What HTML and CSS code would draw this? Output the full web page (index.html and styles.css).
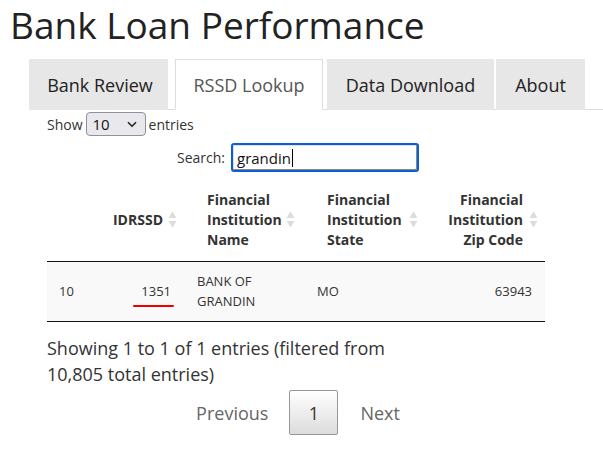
FILE: index.html
```html
<!DOCTYPE html>
<html>
<head>
<meta charset="utf-8">
<link rel="stylesheet" href="styles.css">
</head>
<body>
<h1 class="title">Bank Loan Performance</h1>
<ul class="tabs">
  <li class="tab tab-review">Bank Review</li>
  <li class="tab tab-rssd active">RSSD Lookup</li>
  <li class="tab tab-data">Data Download</li>
  <li class="tab tab-about">About</li>
</ul>
<div class="content">
  <div class="length">
    <span>Show</span>
    <span class="select"><span class="select-val">10</span>
      <svg class="chev" width="10" height="7" viewBox="0 0 10 7"><path d="M1 1.2 L5 5.2 L9 1.2" fill="none" stroke="#222" stroke-width="1.6"/></svg>
    </span>
    <span>entries</span>
  </div>
  <div class="filter">
    <span class="filter-label">Search:</span>
    <span class="search"><span class="search-text">grandin</span><span class="caret"></span></span>
  </div>
  <table class="grid">
    <colgroup>
      <col class="c0"><col class="c1"><col class="c2"><col class="c3"><col class="c4">
    </colgroup>
    <thead>
      <tr>
        <th class="h0"></th>
        <th class="h1 sort">IDRSSD<svg class="arrows" width="9" height="17" viewBox="0 0 9 17"><path d="M4.5 0.5 L8.5 7 L0.5 7 Z" fill="#dcdcdc"/><path d="M0.5 10 L8.5 10 L4.5 16.5 Z" fill="#dcdcdc"/></svg></th>
        <th class="h2 sort">Financial<br>Institution<br>Name<svg class="arrows" width="9" height="17" viewBox="0 0 9 17"><path d="M4.5 0.5 L8.5 7 L0.5 7 Z" fill="#dcdcdc"/><path d="M0.5 10 L8.5 10 L4.5 16.5 Z" fill="#dcdcdc"/></svg></th>
        <th class="h3 sort">Financial<br>Institution<br>State<svg class="arrows" width="9" height="17" viewBox="0 0 9 17"><path d="M4.5 0.5 L8.5 7 L0.5 7 Z" fill="#dcdcdc"/><path d="M0.5 10 L8.5 10 L4.5 16.5 Z" fill="#dcdcdc"/></svg></th>
        <th class="h4 sort">Financial<br>Institution<br>Zip Code<svg class="arrows" width="9" height="17" viewBox="0 0 9 17"><path d="M4.5 0.5 L8.5 7 L0.5 7 Z" fill="#dcdcdc"/><path d="M0.5 10 L8.5 10 L4.5 16.5 Z" fill="#dcdcdc"/></svg></th>
      </tr>
    </thead>
    <tbody>
      <tr>
        <td class="d0">10</td>
        <td class="d1"><span class="mark">1351</span></td>
        <td class="d2">BANK OF<br>GRANDIN</td>
        <td class="d3">MO</td>
        <td class="d4">63943</td>
      </tr>
    </tbody>
  </table>
  <div class="info">Showing 1 to 1 of 1 entries (filtered from 10,805 total entries)</div>
  <div class="paging">
    <span class="pg pg-off pg-prev">Previous</span>
    <span class="pg pg-cur">1</span>
    <span class="pg pg-off pg-next">Next</span>
  </div>
</div>
</body>
</html>
```
FILE: styles.css
```css
html, body {
  margin: 0;
  padding: 0;
  background: #fff;
}
body {
  font-family: "Open Sans", "DejaVu Sans", sans-serif;
  color: #333;
}
.title {
  margin: 0;
  padding: 0 0 0 10px;
  height: 59px;
  font-size: 37px;
  line-height: 50px;
  font-weight: 400;
  color: #222;
}
.tabs {
  list-style: none;
  margin: 0 0 0 29px;
  padding: 0;
  display: flex;
  border-bottom: 1px solid #ddd;
  height: 50px;
}
.tab {
  box-sizing: border-box;
  height: 51px;
  background: #e7e7e7;
  color: #222;
  font-size: 18px;
  display: flex;
  align-items: center;
  justify-content: center;
}
.tab-review { width: 139px; margin-right: 7px; padding-left: 3px; }
.tab-rssd { width: 148px; margin-right: 4px; }
.tab-data { width: 167px; margin-right: 2px; }
.tab-about { width: 89px; }
.tab.active {
  background: #fff;
  color: #555;
  border: 1px solid #ddd;
  border-bottom-color: #fff;
}
.content {
  margin-left: 47px;
  width: 498px;
}
.length {
  margin-top: 2px;
  height: 24px;
  display: flex;
  align-items: center;
  gap: 3px;
  font-size: 14px;
  color: #333;
}
.select {
  box-sizing: border-box;
  width: 60px;
  height: 24px;
  border: 1px solid #8f8f9d;
  border-radius: 4px;
  background: #e9e9ed;
  display: flex;
  align-items: center;
  justify-content: space-between;
  padding: 0 8px 0 6px;
  font-size: 15px;
  color: #111;
}
.filter {
  width: 372px;
  margin-top: 7px;
  display: flex;
  justify-content: flex-end;
  align-items: center;
  gap: 6px;
  font-size: 14px;
}
.search {
  box-sizing: border-box;
  width: 188px;
  height: 29px;
  border: 2px solid #0b5fd4;
  border-radius: 3px;
  box-shadow: inset -1px -1px 0 #8a8a8a, inset 1px 1px 0 #e0e0e0;
  display: flex;
  align-items: center;
  padding-left: 4px;
  font-size: 15px;
  color: #111;
}
.caret {
  display: inline-block;
  width: 0;
  height: 18px;
  border-left: 1px solid #000;
  margin-left: 1px;
}
.grid {
  margin-top: 6px;
  width: 498px;
  table-layout: fixed;
  border-collapse: collapse;
  border-spacing: 0;
}
.c0 { width: 60px; }
.c1 { width: 80px; }
.c2 { width: 120px; }
.c3 { width: 123px; }
.c4 { width: 115px; }
.grid th {
  position: relative;
  font-size: 14px;
  font-weight: 700;
  line-height: 20px;
  color: #333;
  padding: 12px 10px 11px 20px;
  text-align: left;
  vertical-align: middle;
  border-bottom: 1px solid #111;
  white-space: nowrap;
}
.grid th.h1 { text-align: right; padding-left: 0; padding-right: 24px; }
.grid th.h4 { text-align: right; padding-left: 0; padding-right: 22px; }
.arrows {
  position: absolute;
  top: 50%;
  margin-top: -9px;
  right: 10px;
}
.h2 .arrows, .h3 .arrows { right: 12px; }
.h4 .arrows { right: 7px; }
.grid td {
  background: #f9f9f9;
  font-size: 13px;
  line-height: 20px;
  color: #333;
  padding: 9px 10px 10px 10px;
  vertical-align: middle;
  border-bottom: 1px solid #111;
}
.grid td.d0 { padding-left: 12px; }
.grid td.d1 { text-align: right; padding-right: 16px; }
.grid td.d4 { text-align: right; padding-right: 13px; }
.mark {
  position: relative;
  display: inline-block;
}
.mark::after {
  content: "";
  position: absolute;
  left: -8px;
  right: -3px;
  bottom: -6px;
  height: 2px;
  background: #e00;
  border-radius: 1px;
}
.info {
  margin-top: 13px;
  width: 380px;
  font-size: 18px;
  line-height: 26px;
  color: #333;
}
.paging {
  margin-top: 3px;
  padding-left: 4px;
  display: flex;
  justify-content: center;
  align-items: center;
  font-size: 18px;
}
.pg {
  box-sizing: border-box;
  height: 45px;
  display: flex;
  align-items: center;
  justify-content: center;
  padding: 0 20px;
}
.pg-prev { padding-right: 21px; }
.pg-next { padding-left: 22px; }
.pg-off { color: #666; }
.pg-cur {
  width: 49px;
  padding: 0;
  color: #333;
  border: 1px solid #979797;
  border-radius: 2px;
  background: linear-gradient(to bottom, #fff 0%, #dcdcdc 100%);
}
```
